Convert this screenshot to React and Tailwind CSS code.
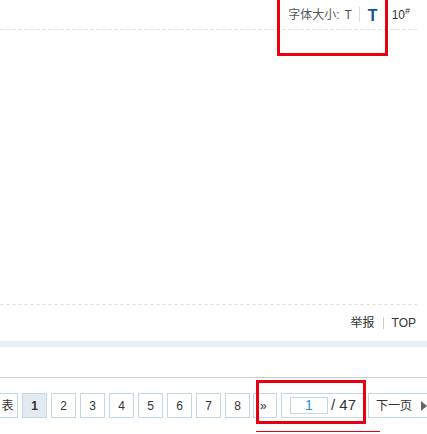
const font = { fontFamily: '"Liberation Sans", Arial, "Noto Sans CJK SC", sans-serif' };

function PageBox({ children, active, className = '' }) {
  return (
    <div
      className={`h-[25px] shrink-0 flex items-center justify-center border border-[#c5d6e4] text-[12px] text-[#333] ${
        active ? 'bg-[#e3eaf1] font-bold' : 'bg-white'
      } ${className}`}
    >
      {children}
    </div>
  );
}

export default function App() {
  const pages = [2, 3, 4, 5, 6, 7, 8];

  return (
    <div className="w-[427px] h-[434px] bg-white overflow-hidden flex flex-col" style={font}>
      {/* font size bar */}
      <div className="relative h-[29px] flex items-center justify-end pr-[17px] text-[#555]">
        <span className="text-[12px] mr-[5px] whitespace-nowrap">字体大小:</span>
        <span className="text-[12px] text-[#555]">T</span>
        <span className="w-px h-[15px] bg-[#ddd] ml-[7px] mr-[8px]"></span>
        <span className="text-[16px] leading-none font-bold text-[#1b4f9c] mr-[14px] mt-[3px]">T</span>
        <span className="text-[12px] text-[#333] whitespace-nowrap">
          10<span className="text-[9px] relative -top-[5px]">#</span>
        </span>
        <div className="absolute left-[277px] top-[-4px] w-[111px] h-[60px] border-[3px] border-[#e60012]"></div>
      </div>
      <div className="h-px w-[417px] bg-[repeating-linear-gradient(to_right,#e3e3e3_0_4px,transparent_4px_6px)]"></div>

      <div className="h-[274px]"></div>

      <div className="h-px w-[417px] bg-[repeating-linear-gradient(to_right,#e3e3e3_0_4px,transparent_4px_6px)]"></div>

      {/* report / top */}
      <div className="h-[36px] flex items-center justify-end pr-[11px] text-[12px] text-[#333]">
        <span>举报</span>
        <span className="w-px h-[12px] bg-[#ccc] mx-[8px]"></span>
        <span>TOP</span>
      </div>

      <div className="h-[6px] bg-[#e6edf4]"></div>
      <div className="h-[30px]"></div>
      <div className="h-px bg-[#cccccc]"></div>

      {/* pagination */}
      <div className="relative mt-[15px] flex items-center gap-[4px] -ml-[7px]">
        <PageBox className="w-[25px] pl-[4px]">表</PageBox>
        <PageBox active className="w-[25px]">1</PageBox>
        {pages.map((p) => (
          <PageBox key={p} className="w-[25px]">{p}</PageBox>
        ))}
        <PageBox className="w-[24px] text-[11px] justify-start pl-[6px] -ml-px">»</PageBox>
        <div className="h-[25px] w-[83px] shrink-0 border border-[#c5d6e4] flex items-center pl-[8px]">
          <div className="w-[38px] h-[17px] border border-[#c5d6e4] flex items-center justify-center text-[14px] text-[#2a8fd8]">
            1
          </div>
          <span className="ml-[3px] text-[15px] text-[#333] whitespace-nowrap">/ 47</span>
        </div>
        <div className="h-[25px] w-[70px] shrink-0 border border-[#c5d6e4] border-r-0 flex items-center pl-[7px] text-[12px] text-[#333] whitespace-nowrap">
          下一页
          <span className="ml-[9px] w-0 h-0 border-y-[5px] border-y-transparent border-l-[6px] border-l-[#666]"></span>
        </div>
        <div className="absolute left-[263px] top-[-13px] w-[110px] h-[44px] border-[3px] border-[#e60012]"></div>
      </div>
      <div className="mt-[13px] ml-[256px] w-[124px] h-px bg-[#e60012]"></div>
    </div>
  );
}
